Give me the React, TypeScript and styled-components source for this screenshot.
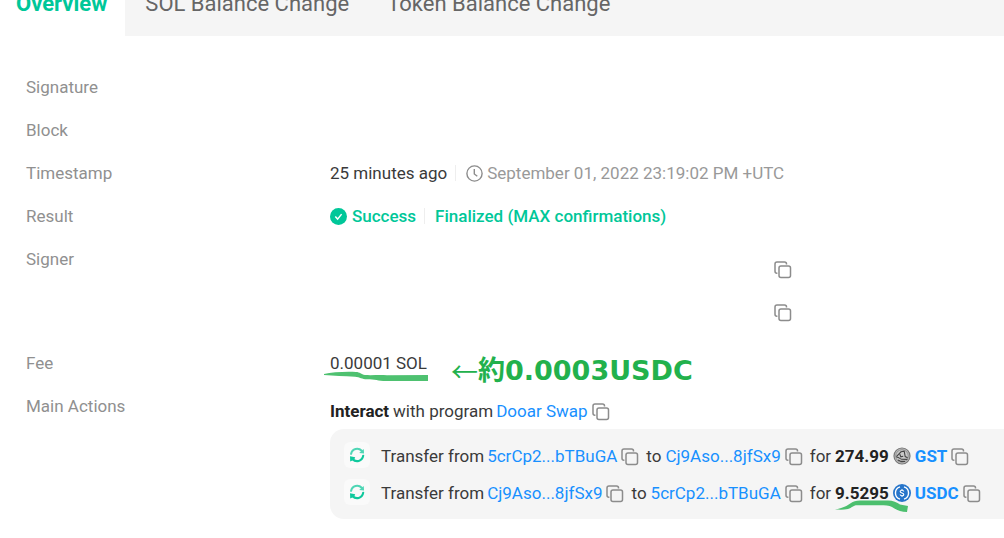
import React from "react";
import styled, { createGlobalStyle } from "styled-components";

const GlobalStyle = createGlobalStyle`
  * { box-sizing: border-box; }
  body {
    margin: 0;
    background: #fff;
    color: #3a3a3a;
    font-family: Roboto, "Liberation Sans", sans-serif;
    font-size: 17px;
    line-height: 24px;
    overflow: hidden;
  }
`;

const Page = styled.main`
  display: flex;
  flex-direction: column;
`;

const TabBar = styled.nav`
  display: flex;
  height: 66px;
  margin-top: -30px;
  background: #f5f5f5;
`;

const Tab = styled.button<{ $active?: boolean }>`
  border: 0;
  padding: 0 18px 0 20px;
  background: ${(p) => (p.$active ? "#fff" : "transparent")};
  color: ${(p) => (p.$active ? "#00c799" : "#666")};
  font-family: inherit;
  font-size: 22px;
  font-weight: ${(p) => (p.$active ? 700 : 400)};
  white-space: nowrap;
  cursor: pointer;

  &:first-child { padding-left: 16px; }
`;

const Details = styled.dl`
  margin: 0;
  padding: 30px 0 20px 26px;
`;

const Row = styled.div`
  display: grid;
  grid-template-columns: 304px minmax(0, 1fr);
  min-height: 43px;
`;

const Label = styled.dt`
  padding-top: 9px;
  color: #909090;
`;

const Value = styled.dd<{ $top?: number }>`
  display: flex;
  flex-direction: column;
  margin: 0;
  padding-top: ${(p) => p.$top ?? 9}px;
  white-space: nowrap;
`;

const Line = styled.div`
  display: flex;
  align-items: center;
`;

const Time = styled.time`
  margin-left: 4px;
  color: #999;
`;

const Divider = styled.span`
  width: 1px;
  height: 16px;
  margin: 0 10px 0 8px;
  background: #eee;
`;

const Status = styled.span`
  color: #00c799;
  font-weight: 500;
`;

const SignerLine = styled.div`
  display: flex;
  align-items: center;
  height: 43px;
  padding-left: 444px;

  &:last-child { margin-bottom: 9px; }
`;

const CopyButton = styled.button`
  display: inline-flex;
  flex: none;
  border: 0;
  margin-top: 2px;
  padding: 0;
  background: none;
  cursor: pointer;
`;

const Link = styled.a<{ $bold?: boolean }>`
  margin-right: 4px;
  color: #1890ff;
  font-weight: ${(p) => (p.$bold ? 700 : 400)};
  text-decoration: none;
`;

const Text = styled.span`
  margin-right: 3px;
`;

const Strong = styled.strong`
  margin-right: 4px;
  color: #222;
  font-weight: 700;
`;

const Joiner = styled.span`
  margin: 0 4px 0 7px;
`;

const Marked = styled.span`
  position: relative;
  display: inline-flex;
`;

const FeeMark = styled.svg`
  position: absolute;
  left: -6px;
  top: 18px;
`;

const AmountMark = styled.svg`
  position: absolute;
  left: 0;
  top: 17px;
`;

const Note = styled.span`
  position: absolute;
  left: 121px;
  top: 0;
  display: flex;
  align-items: center;
  color: #22b14c;
  font-family: "DejaVu Sans", "Noto Sans CJK JP", sans-serif;
  font-size: 27px;
  font-weight: 700;
  line-height: 40px;
`;

const Arrow = styled.span`
  font-family: "Noto Sans CJK JP", sans-serif;
  font-weight: 400;
`;

const Actions = styled.ul`
  display: flex;
  flex-direction: column;
  gap: 9px;
  margin: 6px 0 0;
  padding: 13px 14px 12px;
  border-radius: 14px 0 0 14px;
  background: #f5f5f5;
  list-style: none;
`;

const Action = styled.li`
  display: flex;
  align-items: center;
  height: 28px;
`;

const Badge = styled.span`
  display: flex;
  flex: none;
  align-items: center;
  align-self: flex-start;
  justify-content: center;
  width: 26px;
  height: 26px;
  margin-right: 11px;
  border-radius: 6px;
  background: #fafafa;
`;

const Icon = styled.svg`
  display: block;
  flex: none;
`;

const CheckIcon = styled(Icon)`
  margin-right: 5px;
`;

const TokenIcon = styled(Icon)`
  margin-right: 4px;
`;

const Copy = () => (
  <CopyButton type="button" aria-label="Copy">
    <Icon width="18" height="18" viewBox="0 0 18 18" fill="none" stroke="#8c8c8c" strokeWidth="1.5">
      <rect x="5" y="5" width="11.5" height="11.5" rx="2" />
      <path d="M3.4 12.3H3a2 2 0 0 1-2-2V3a2 2 0 0 1 2-2h7.5a2 2 0 0 1 2 2v.5" />
    </Icon>
  </CopyButton>
);

const Clock = () => (
  <Icon width="17" height="17" viewBox="0 0 17 17" fill="none" stroke="#8c8c8c" strokeWidth="1.4">
    <circle cx="8.5" cy="8.5" r="7.6" />
    <path d="M8.3 4v5l3 2.2" />
  </Icon>
);

const Check = () => (
  <CheckIcon width="17" height="17" viewBox="0 0 17 17">
    <circle cx="8.5" cy="8.5" r="8.5" fill="#00c799" />
    <path d="M5.3 8.6l2.3 2.5 4-5" fill="none" stroke="#fff" strokeWidth="1.5" />
  </CheckIcon>
);

const Swap = () => (
  <Icon width="16" height="16" viewBox="0 0 16 16" fill="none" strokeWidth="2.1" strokeLinecap="round">
    <path d="M2.1 6.8C3 1.4 9.5.2 12.700 3.800" stroke="#4fd6b5" />
    <path d="M14.800 2l.2 4.600-4.800-.7z" fill="#4fd6b5" />
    <path d="M14.200 8.700C13.300 14.500 6.700 15.700 3.500 12" stroke="#10c99d" />
    <path d="M1.200 14.400L1 9.300l5.200.9-1 2.600z" fill="#10c99d" />
  </Icon>
);

const GstIcon = () => (
  <TokenIcon width="18" height="18" viewBox="0 0 18 18">
    <circle cx="9" cy="9" r="8" fill="#c4c4c4" stroke="#777" strokeWidth="1.2" />
    <circle cx="9" cy="9" r="6.3" fill="#c9c9c9" stroke="#777" strokeWidth=".7" />
    <path
      d="M3.4 9.6L8 4.8l3.2-.6 1 5.4 2.4 1.2M3.6 10.4c2-.8 3 1.6 5 1.8l5.800.2M6.800 7.200l1 2.600 2.400-.6M5 13l3 1.400h4"
      fill="none"
      stroke="#444"
      strokeWidth="1.1"
    />
  </TokenIcon>
);

const UsdcIcon = () => (
  <TokenIcon width="18" height="18" viewBox="0 0 18 18" fill="none" stroke="#fff">
    <circle cx="9" cy="9" r="9" fill="#2775ca" stroke="none" />
    <path d="M7 2.8a6.500 6.500 0 0 0 0 12.400M11 2.800a6.500 6.500 0 0 1 0 12.400" strokeWidth="1.4" />
    <path
      d="M10.800 7.500C10.600 6.600 10 6.300 9 6.300c-1.100 0-1.800.4-1.800 1.200C7.200 9.400 10.800 8.400 10.800 10.500c0 .9-.7 1.300-1.800 1.300s-1.800-.4-1.900-1.300M9 5V6.300M9 11.800V13"
      strokeWidth="1.1"
    />
  </TokenIcon>
);

interface Transfer {
  from: string;
  to: string;
  amount: string;
  token: string;
}

const transfers: Transfer[] = [
  { from: "5crCp2...bTBuGA", to: "Cj9Aso...8jfSx9", amount: "274.99", token: "GST" },
  { from: "Cj9Aso...8jfSx9", to: "5crCp2...bTBuGA", amount: "9.5295", token: "USDC" },
];

const TransferRow = ({ from, to, amount, token }: Transfer) => (
  <Action>
    <Badge>
      <Swap />
    </Badge>
    <Text>Transfer from</Text>
    <Link href="#from">{from}</Link>
    <Copy />
    <Joiner>to</Joiner>
    <Link href="#to">{to}</Link>
    <Copy />
    <Joiner>for</Joiner>
    <Marked>
      <Strong>{amount}</Strong>
      {token === "USDC" && (
        <AmountMark width="76" height="16" viewBox="0 0 76 16">
          <path
            d="M0 11.5C8 10 12 8 16 5c2-1.6 5-2.5 9-2.5h28c5 0 9 2 12 4l8 1.5-1 6c-6 0-10-2-15-5-3-1.5-7-1.7-12-1.7H22c-4 0-5 2.7-9 3.7-5 1-9 .6-13 .5z"
            fill="#22b14c"
            fillOpacity=".8"
          />
        </AmountMark>
      )}
    </Marked>
    {token === "USDC" ? <UsdcIcon /> : <GstIcon />}
    <Link href="#token" $bold>
      {token}
    </Link>
    <Copy />
  </Action>
);

export default function App() {
  return (
    <Page>
      <GlobalStyle />
      <TabBar>
        <Tab type="button" $active>Overview</Tab>
        <Tab type="button">SOL Balance Change</Tab>
        <Tab type="button">Token Balance Change</Tab>
      </TabBar>
      <Details>
        <Row>
          <Label>Signature</Label>
        </Row>
        <Row>
          <Label>Block</Label>
        </Row>
        <Row>
          <Label>Timestamp</Label>
          <Value>
            <Line>
              <span>25 minutes ago</span>
              <Divider />
              <Clock />
              <Time>September 01, 2022 23:19:02 PM +UTC</Time>
            </Line>
          </Value>
        </Row>
        <Row>
          <Label>Result</Label>
          <Value>
            <Line>
              <Check />
              <Status>Success</Status>
              <Divider />
              <Status>Finalized (MAX confirmations)</Status>
            </Line>
          </Value>
        </Row>
        <Row>
          <Label>Signer</Label>
          <Value>
            <SignerLine>
              <Copy />
            </SignerLine>
            <SignerLine>
              <Copy />
            </SignerLine>
          </Value>
        </Row>
        <Row>
          <Label>Fee</Label>
          <Value>
            <Line>
              <Marked>
                0.00001 SOL
                <FeeMark width="108" height="14" viewBox="0 0 108 14">
                  <path
                    d="M0 5c8-1.7 20-2.5 32-2 4 0 5 2.5 9 3 8 .5 15-.5 22 .3l41-.3v6H62c-8 0-11-1.7-19-1.7-5 0-7-2.3-12-2.6C20 7 10 7 0 6z"
                    fill="#22b14c"
                    fillOpacity=".8"
                  />
                </FeeMark>
                <Note>
                  <Arrow>←</Arrow>約0.0003USDC
                </Note>
              </Marked>
            </Line>
          </Value>
        </Row>
        <Row>
          <Label>Main Actions</Label>
          <Value $top={14}>
            <Line>
              <Strong>Interact</Strong>
              <Text>with program</Text>
              <Link href="#program">Dooar Swap</Link>
              <Copy />
            </Line>
            <Actions>
              {transfers.map((t) => (
                <TransferRow key={t.token} {...t} />
              ))}
            </Actions>
          </Value>
        </Row>
      </Details>
    </Page>
  );
}
